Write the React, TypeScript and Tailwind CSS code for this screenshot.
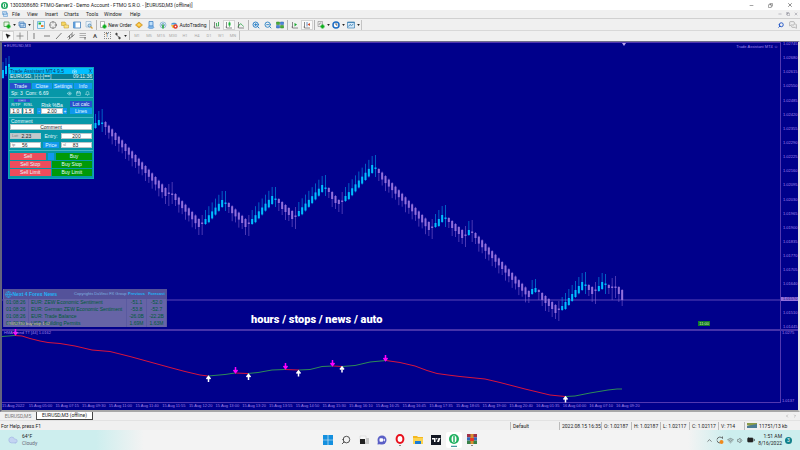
import React from "react";
import {
  Search, Cloud, Wifi, Volume1, BatteryFull, ChevronUp, ChevronLeft, ChevronRight,
  Minus, X, Copy, ZoomIn, ZoomOut, Crosshair, MousePointer2, MessagesSquare, Camera, Eye, Bell, Calendar, Globe,
} from "lucide-react";

type Candle = { x: number; top: number; bottom: number; high: number; low: number; up: boolean };
// [first index, first top, first bottom, last index, last top, last bottom]
type Run = [number, number, number, number, number, number];
// [index, price, high, low, rising]
type Doji = [number, number, number, number, boolean];

const RUNS: Run[] = [
  [0, 123, 128, 1, 120, 125],
  [3, 122, 127, 21, 188, 196],
  [24, 194, 200, 31, 219, 227],
  [33, 219, 224, 38, 200, 207],
  [40, 203, 207, 45, 219, 227],
  [47, 219, 224, 53, 196, 204],
  [55, 199, 203, 59, 211, 219],
  [61, 211, 216, 68, 185, 192],
  [70, 188, 192, 73, 200, 204],
  [75, 196, 201, 83, 165, 173],
  [85, 169, 173, 100, 222, 230],
  [102, 223, 227, 104, 215, 222],
  [106, 218, 222, 110, 230, 238],
  [112, 230, 235, 112, 230, 235],
  [114, 233, 238, 130, 291, 297],
  [131, 289, 294, 132, 288, 292],
  [133, 290, 292, 138, 305, 313],
  [140, 306, 310, 146, 282, 290],
  [148, 285, 290, 149, 287, 294],
  [151, 286, 291, 152, 282, 289],
  [154, 285, 288, 154, 285, 288],
  [157, 287, 294, 158, 290, 300],
];
const RISING = new Set([0, 33, 47, 61, 75, 102, 112, 131, 140, 151]);

const DOJIS: Doji[] = [
  [2, 123, 109, 132, true], [22, 193, 184, 206, false], [23, 194, 182, 204, false],
  [32, 223, 215, 235, false], [39, 203, 191, 211, true], [46, 223, 215, 236, false],
  [54, 199, 187, 207, true], [60, 216, 207, 229, false], [69, 188, 175, 196, true],
  [74, 201, 192, 214, false], [84, 168, 155, 177, true], [101, 227, 219, 239, false],
  [105, 218, 205, 227, true], [111, 235, 226, 247, false], [113, 232, 220, 242, false],
  [139, 309, 301, 321, false], [147, 285, 272, 294, true], [150, 290, 282, 304, false],
  [153, 284, 274, 294, true], [155, 287, 278, 300, false], [156, 287, 276, 298, false],
];

function buildCandles(): Candle[] {
  const at = (i: number) => 95.5 + i * (10 / 3);
  const out: Candle[] = [];
  for (const [a, t0, b0, z, t1, b1] of RUNS) {
    const up = RISING.has(a);
    for (let i = a; i <= z; i++) {
      const f = z === a ? 0 : (i - a) / (z - a);
      const top = t0 + (t1 - t0) * f;
      const end = b0 + (b1 - b0) * f;
      const bottom = i > a && i < z ? Math.max(end, top + 7) : end;
      out.push({ x: at(i), top, bottom, high: up ? top - 9 : top - 1, low: up ? bottom + 1 : bottom + 6 + (i % 2) * 2, up });
    }
  }
  for (const [i, y, high, low, up] of DOJIS) out.push({ x: at(i), top: y - 0.5, bottom: y + 1, high, low, up });
  out.push({ x: 3, top: 70, bottom: 78, high: 62, low: 79, up: true });
  out.push({ x: 6, top: 66, bottom: 74, high: 58, low: 76, up: true });
  out.push({ x: 9, top: 64, bottom: 68, high: 56, low: 70, up: true });
  return out;
}
const CANDLES = buildCandles();

const PRICES = Array.from({ length: 21 }, (_, i) => (1.02745 - i * 0.00065).toFixed(5));
const LAST_PRICE_ROW = 18;
const TIMES = [
  "15 Aug 2022", "15 Aug 05:00", "15 Aug 07:15", "15 Aug 09:30", "15 Aug 11:00", "15 Aug 11:40", "15 Aug 11:55",
  "15 Aug 12:20", "15 Aug 13:00", "15 Aug 13:20", "15 Aug 13:55", "15 Aug 14:50", "15 Aug 15:30", "15 Aug 16:10",
  "15 Aug 16:25", "15 Aug 16:45", "15 Aug 17:35", "15 Aug 18:05", "15 Aug 19:00", "15 Aug 20:40", "16 Aug 01:35",
  "16 Aug 04:00", "16 Aug 07:10", "16 Aug 09:20",
];

const RED = [
  "15,335.5 22,336 30,338.5 40,341 48,342.5 60,343.5 75,346 92,350 110,351.5 130,356.5 150,362 170,367.5 185,371.5 200,375 208,376",
  "235,373 248,373.5", "285,369.5 299,370", "333,366 342,366.5",
  "386,360.5 400,362.5 415,366 427,370.5 437,373.5 448,375 460,376.5 485,379 500,382.5 525,389 550,395 565,396.5",
];
const GREEN = [
  "2,336.5 15,335.5", "208,376 225,374.5 235,373", "248,373.5 258,372.5 272,370 285,369.5",
  "299,370 310,369.5 322,366.5 333,366", "342,366.5 355,365.5 370,362 386,360.5", "565,396.5 575,396 590,393 608,390 617,389 622,389",
];
const DOWN = [[15.5, 332], [235.5, 370], [285.5, 366], [332.5, 363], [385.5, 358]];
const UP = [[208.5, 379], [248.5, 377], [298.5, 373.5], [342, 369.5], [565.5, 399.5]];

function Sep() {
  return <span className="mx-px h-[10px] w-px shrink-0 bg-[#b4b4b4]" />;
}

function Tool({ label, pressed, menu, children }: { label: string; pressed?: boolean; menu?: boolean; children: React.ReactNode }) {
  return (
    <button aria-label={label} className={`flex h-[10px] shrink-0 items-center justify-center ${menu ? "w-[15px]" : "w-[12px]"} ${pressed ? "border border-[#d4d4d4] bg-[#fafafa]" : ""}`}>
      {children}
      {menu && <svg viewBox="0 0 4 3" className="ml-[2px] h-[2px] w-[3px] shrink-0"><path d="M0 0h4L2 3z" fill="#222" /></svg>}
    </button>
  );
}

function Ic({ children }: { children: React.ReactNode }) {
  return <svg viewBox="0 0 16 16" className="h-[8px] w-[8px] shrink-0" fill="none">{children}</svg>;
}

const plus = <path d="M11 7v8M7 11h8" stroke="#0caf1c" strokeWidth="4" />;
const axes = <path d="M3 2v12h11M1 12h3" stroke="#666" strokeWidth="1.5" />;

function Toolbar() {
  return (
    <div className="flex h-[12px] items-center border-t border-[#d0d0d0] bg-[#f0f0f0] pl-[2px]">
      <Tool label="New chart" menu><Ic><path d="M2 2h10v9H2z" fill="#e8f5e4" stroke="#4a9a4a" strokeWidth="1.5" />{plus}</Ic></Tool>
      <Tool label="Profiles" menu><Ic><path d="M2 2h10v8H2zM4 5h11v8H4z" fill="#c9e0f6" stroke="#4a82bc" strokeWidth="1.5" /></Ic></Tool>
      <Sep />
      <Tool label="Market watch"><Ic><path d="M1 1h14v14H1z" fill="#e4f4fb" stroke="#58a8d8" strokeWidth="1.5" /><path d="M3 3h5v4H3z" fill="#1cb430" /><path d="M8 8h5v4H8z" fill="#f08030" /></Ic></Tool>
      <Tool label="Data window"><Crosshair size={8} color="#666" /></Tool>
      <Tool label="Navigator"><Ic><path d="M1 2h7l2 3v4H1z" fill="#f6d660" stroke="#b8922a" /><path d="M6 8h9v6H6z" fill="#fbe486" stroke="#b8922a" /></Ic></Tool>
      <Tool label="Terminal"><Ic><path d="M1 2h14v12H1z" fill="#fff" stroke="#3a78b8" strokeWidth="1.5" /><path d="M1 2h4v12H1z" fill="#5c9ddb" /></Ic></Tool>
      <Tool label="Strategy tester"><Ic><path d="M2 1h10v11H2z" fill="#eaf4fb" stroke="#7aa0c0" /><circle cx="9" cy="9" r="3" fill="#b8dcf4" stroke="#5080a8" strokeWidth="1.5" /><path d="m11 11 4 4" stroke="#d8a030" strokeWidth="2.5" /></Ic></Tool>
      <Sep />
      <button className="flex h-[10px] shrink-0 items-center pl-px">
        <Ic><path d="M3 1h8v12H3z" fill="#fff" stroke="#777" />{plus}</Ic>
        <span className="w-[26px] text-center">New Order</span>
      </button>
      <Tool label="MetaEditor"><Ic><path d="m8 2 7 6-7 6-7-6z" fill="#f2b32c" stroke="#b67c10" /><path d="m8 5 4 3-4 2-4-2z" fill="#fbdc70" /></Ic></Tool>
      <Tool label="Virtual hosting"><Ic><path d="M4 1h8v9H4z" fill="#bfe0fa" stroke="#3a7cc4" strokeWidth="1.5" /><ellipse cx="8" cy="12.500" rx="6" ry="2.500" fill="#7fb8ec" stroke="#3a7cc4" /></Ic></Tool>
      <Tool label="Signals"><Ic><circle cx="8" cy="8" r="6" stroke="#7fb0d4" strokeWidth="1.500" /><circle cx="8" cy="8" r="3" stroke="#5a98c8" strokeWidth="1.500" /><path d="M8 7v8" stroke="#28a838" strokeWidth="3" /></Ic></Tool>
      <button className="flex h-[10px] shrink-0 items-center pl-px">
        <Ic><path d="M2 7c0-5 12-5 12 0z" fill="#4a9ad4" /><path d="M2 8h9l-2 6H5z" fill="#f0c040" /><circle cx="11" cy="11" r="4.500" fill="#e03020" /><path d="M9.500 9.500h3v3h-3z" fill="#fff" /></Ic>
        <span className="w-[30px] text-center">AutoTrading</span>
      </button>
      <Sep />
      <Tool label="Bar chart"><Ic>{axes}<path d="M7 4v7M11 2v8M9 10h2" stroke="#0c9a2c" strokeWidth="1.500" /></Ic></Tool>
      <Tool label="Candlesticks" pressed><Ic>{axes}<path d="M9 1v11" stroke="#0c9a2c" /><path d="M7 3h4v6H7z" fill="#14b834" /></Ic></Tool>
      <Tool label="Line chart"><Ic>{axes}<path d="M3 11c3-8 5-6 10 0" stroke="#0c9a2c" strokeWidth="1.500" /></Ic></Tool>
      <Sep />
      <Tool label="Zoom in"><ZoomIn size={8} color="#2a80c8" strokeWidth={3} /></Tool>
      <Tool label="Zoom out"><ZoomOut size={8} color="#3a8ac8" strokeWidth={3} /></Tool>
      <Tool label="Tile windows"><Ic><path d="M1 2h6v5H1zM9 9h6v5H9z" fill="#48b038" stroke="#287c20" /><path d="M9 2h6v5H9zM1 9h6v5H1z" fill="#4888dc" stroke="#2858a8" /></Ic></Tool>
      <Sep />
      <Tool label="Auto scroll"><Ic>{axes}<path d="m7 4 5 3-5 4z" fill="#18a830" /></Ic></Tool>
      <Tool label="Chart shift" pressed><Ic>{axes}<path d="M8 2v9" stroke="#3870b8" strokeWidth="1.500" /><path d="m14 4-5 3 5 3z" fill="#d05030" /></Ic></Tool>
      <Sep />
      <Tool label="Indicators" menu><Ic><path d="M2 1h9v10H2z" fill="#eee" stroke="#777" /><path d="M4 8c2-6 3-3 5-4" stroke="#444" />{plus}</Ic></Tool>
      <Tool label="Periods" menu><Ic><circle cx="8" cy="8" r="6" fill="#fff" stroke="#1c6cc4" strokeWidth="3" /><path d="M8 4v4h3" stroke="#333" strokeWidth="1.500" /></Ic></Tool>
      <Tool label="Templates" menu><Ic><path d="M1 2h14v12H1z" fill="#d4e8f8" stroke="#4888b8" strokeWidth="1.500" /><path d="M1 3h14M3 11l3-4 3 2 4-3" stroke="#4888b8" strokeWidth="2" /></Ic></Tool>
      <span className="h-[10px] w-px bg-[#c4c4c4]" />
      <div className="ml-auto flex items-center gap-[5px] pr-[3px]">
        <button aria-label="Search"><Search size={6} color="#2a5cc8" strokeWidth={4} className="-scale-x-100" /></button>
        <button aria-label="Chat"><MessagesSquare size={8} color="#9a9a9a" /></button>
      </div>
    </div>
  );
}

function LineTools() {
  return (
    <div className="flex h-[10px] items-center border-t border-[#d8d8d8] bg-[#f0f0f0] pl-[2px] text-[4px]">
      <Tool label="Cursor" pressed><MousePointer2 size={6} fill="#111" color="#111" /></Tool>
      <Tool label="Crosshair"><Ic><path d="M8 1v14M1 8h14" stroke="#777" strokeWidth="1.500" /></Ic></Tool>
      <Sep />
      <Tool label="Vertical line"><Ic><path d="M6 2v12" stroke="#555" strokeWidth="1.500" /></Ic></Tool>
      <Tool label="Horizontal line"><Ic><path d="M2 8h12" stroke="#555" strokeWidth="1.500" /></Ic></Tool>
      <Tool label="Trendline"><Ic><path d="M2 14 13 2" stroke="#555" strokeWidth="1.500" /></Ic></Tool>
      <Tool label="Channel"><Ic><path d="M1 11 12 1M3 15 15 5M5 7v6M10 4v6" stroke="#555" strokeWidth="1.500" /></Ic></Tool>
      <Tool label="Fibonacci"><Ic><path d="M1 3h13M1 7h13M1 11h13" stroke="#999" strokeWidth="1.500" /><path d="M12 10v5" stroke="#666" strokeWidth="2" /></Ic></Tool>
      <Tool label="Text"><span className="text-[6px] font-bold text-[#555]">A</span></Tool>
      <Tool label="Text label"><span className="h-[7px] w-[7px] border border-dotted border-[#888] text-[5px] leading-[5px] text-[#444]">T</span></Tool>
      <Tool label="Arrows" menu><Ic><path d="m2 4 3-3 3 3-3 3zM8 12l3-3 3 3-3 3z" fill="#444" /><path d="m5 6 6 5" stroke="#444" strokeWidth="1.500" /></Ic></Tool>
      <Sep />
      {["M1", "M5", "M15", "M30", "H1", "H4", "D1", "W1", "MN"].map((p) => (
        <button key={p} className="w-[12px] text-center text-[#a8a8a8]">{p}</button>
      ))}
      <span className="h-[10px] w-px bg-[#c4c4c4]" />
    </div>
  );
}

const field = "h-[6px] min-w-0 border border-[#b8c4c8] bg-white text-center text-[5px] leading-[4px] text-[#222]";
const blue = "h-[6px] bg-[#1098ee] text-center leading-[6px]";
const navy = "h-[6px] bg-[#2a50cc] text-center leading-[6px]";
const red = "h-[7px] bg-[#ee4c5c]";
const green = "h-[7px] bg-[#009a08]";

function TaggedField({ id, tag, value, muted }: { id: string; tag: string; value: string; muted?: boolean }) {
  return (
    <div className={`flex h-[6px] border border-[#b8c4c8] leading-[4px] text-[#222] ${muted ? "bg-[#c4c8cc]" : "bg-white"}`}>
      <label htmlFor={id} className="pl-px text-[4px] text-[#777]">{tag}</label>
      <input id={id} defaultValue={value} className="w-0 min-w-0 flex-1 pr-[6px] text-center text-[5px] leading-[4px]" />
    </div>
  );
}

function TradePanel() {
  return (
    <section className="absolute left-[6px] top-[24px] flex w-[86px] flex-col border border-[#12a4b8] bg-[#0797a8] font-['Liberation_Sans',sans-serif] text-[5px] leading-[6px] text-[#e6fbff]">
      <header className="flex h-[6px] items-center bg-[#00bfff] px-px text-[#10305c]">
        <span className="whitespace-nowrap">Trade Assistant MT4 9.5</span>
        <Camera size={5} className="ml-[8px]" color="#fff" />
        <button aria-label="Close panel" className="ml-auto">X</button>
      </header>
      <div className="flex h-[6px] justify-between border-b border-[#7cc8d4] bg-[#0b7f96] px-px leading-[5px]"><span>EURUSD, |-|-|-[==]</span><span>09:11:36</span></div>
      <nav className="mt-[3px] flex justify-between gap-px px-px">
        <button className={`${navy} w-[21px]`}>Trade</button>
        <button className={`${blue} w-[20px]`}>Close</button>
        <button className={`${blue} w-[20px]`}>Settings</button>
        <button className={`${blue} w-[18px]`}>Info</button>
      </nav>
      <div className="mt-px flex h-[6px] items-center px-[2px]">
        <span>Sp: 3&nbsp; Com: 6.69</span>
        <span className="ml-auto flex gap-[4px] pr-px"><Eye size={5} /><Calendar size={5} /><Bell size={5} /></span>
      </div>
      <div className="mt-px flex items-end gap-[3px] border-t border-[#45b8c6] px-px pt-px">
        <div className="grid w-[24px] grid-cols-2 gap-x-px">
          <button aria-label="Swap" className="col-span-2 mx-auto flex h-[3px] w-[16px] items-center justify-center bg-[#2a50cc]"><svg viewBox="0 0 8 3" className="h-[3px] w-[8px]" fill="none" stroke="#fff" strokeWidth=".6"><path d="M0 .5l1 1-1 1M2 .5l1 1-1 1M4 .5v2M6 .5l-1 1 1 1M8 .5l-1 1 1 1" /></svg></button>
          <label htmlFor="rtp" className="text-center text-[4px]">R/TP</label><label htmlFor="rsl" className="text-center text-[4px]">R/SL</label>
          <input id="rtp" className={field} defaultValue="1.0" /><input id="rsl" className={field} defaultValue="1.5" />
        </div>
        <div className="flex w-[30px] flex-col">
          <label htmlFor="risk" className="text-center">Risk %Ba</label>
          <div className="flex"><button className={`${blue} w-[4px]`}>-</button><input id="risk" className={`${field} w-0 flex-1`} defaultValue="2.00" /><button className={`${blue} w-[4px]`}>+</button></div>
        </div>
        <div className="flex flex-1 flex-col gap-px">
          <button className={navy}>Lot calc</button>
          <button className={blue}>Lines</button>
        </div>
      </div>
      <div className="mt-[3px] flex flex-col border-t border-[#45b8c6] px-px">
        <label htmlFor="comment" className="px-px">Comment</label>
        <input id="comment" className={field} defaultValue="Comment" />
      </div>
      <div className="mt-[3px] grid grid-cols-[31px_1fr_31px] gap-x-[2px] gap-y-[3px] px-px">
        <TaggedField id="lot" tag="Lot:" value="2.23" muted />
        <label htmlFor="entry" className="text-center">Entry:</label>
        <input id="entry" className={field} defaultValue="200" />
        <TaggedField id="tp" tag="tp" value="56" />
        <button className={blue}>Price</button>
        <TaggedField id="sl" tag="sl" value="83" />
      </div>
      <div className="mt-[2px] flex flex-col gap-px border-t border-[#45b8c6] px-px pb-[2px] pt-[2px] leading-[7px]">
        <div className="flex gap-[2px]"><button className={`${red} w-[36px]`}>Sell</button><button aria-label="Mode" className="h-[7px] w-[6px] bg-[#1098ee]" /><button className={`${green} flex-1`}>Buy</button></div>
        <div className="grid grid-cols-2 gap-px">
          <button className={red}>Sell Stop</button><button className={green}>Buy Stop</button>
          <button className={red}>Sell Limit</button><button className={green}>Buy Limit</button>
        </div>
      </div>
    </section>
  );
}

const NEWS = [
  ["01:08:26", "EUR: ZEW Economic Sentiment", "-51.1", "-52.0"],
  ["01:08:26", "EUR: German ZEW Economic Sentiment", "-53.8", "-52.7"],
  ["01:08:26", "EUR: Trade Balance", "-26.0B", "-22.2B"],
  ["01:08:26", "USD: Building Permits", "1.69M", "1.63M"],
];

function NewsPanel() {
  const td = "border-x border-[#5a5aa0] p-0";
  return (
    <section className="absolute bottom-[2px] left-px w-[164px] bg-[#6664a6] font-['Liberation_Sans',sans-serif] text-[5px]">
      <table className="w-full table-fixed border-collapse">
        <colgroup><col className="w-[25px]" /><col className="w-[98px]" /><col className="w-[20px]" /><col /></colgroup>
        <thead>
          <tr className="h-[10px] bg-[#54529a] text-[#1fb2f6]">
            <th colSpan={2} className="p-0 text-left">
              <span className="flex items-center gap-px pl-px"><Globe size={7} className="shrink-0" /><span className="whitespace-nowrap">Next 4 Forex News</span><span className="ml-auto whitespace-nowrap text-[4px] font-normal text-[#7fb4e0]">Copyrights DaVinci FX Group</span></span>
            </th>
            <th className="p-0 text-[4px]">Previous</th>
            <th className="p-0 text-[4px]">Forecast</th>
          </tr>
        </thead>
        <tbody>
          {NEWS.map((r, i) => (
            <tr key={i} className="h-[7px] leading-[7px] text-[#005c38]">
              <td className={`${td} pl-[2px]`}>{r[0]}</td>
              <td className={`${td} whitespace-nowrap pl-[2px]`}>{r[1]}</td>
              <td className={`${td} text-center`}>{r[2]}</td>
              <td className={`${td} text-center`}>{r[3]}</td>
            </tr>
          ))}
        </tbody>
      </table>
      <span className="absolute bottom-px left-[4px] text-[4px] leading-[5px] text-[#c8c890]">#3352740 buy stop 1.02</span>
    </section>
  );
}

function Chart() {
  return (
    <main className="flex min-h-0 flex-1 flex-col border-x-2 border-b-2 border-t border-b-[#a8a8a8] border-l-[#62627e] border-r-[#e4e4e4] border-t-[#70708c] bg-[#00008b] font-['Liberation_Sans',sans-serif] text-[4px] leading-[4px] text-[#a284ea]">
      <div className="flex min-h-0 flex-[287]">
        <div className="relative min-w-0 flex-1 border-r border-t border-[#5238b0]">
          <svg viewBox="2 43 778 286" preserveAspectRatio="none" className="absolute inset-0 h-full w-full">
            <path d="M2 300h778" stroke="#5a44b8" />
            {CANDLES.map((c, i) => (
              <g key={i} fill={c.up ? "#00bfff" : "#9370db"}>
                <rect x={c.x - 0.5} y={c.high} width="1" height={c.low - c.high} opacity="0.5" />
                <rect x={c.x - 1} y={c.top} width="2" height={c.bottom - c.top} />
              </g>
            ))}
            <path d="M622 43h4l-2 3z" fill="#b9a4f0" />
          </svg>
          <h1 className="absolute left-[2px] top-px text-[4px] font-normal">▾ EURUSD,M3</h1>
          <span className="absolute right-[2px] top-[2px]">Trade Assistant MT4 ☺</span>
          <TradePanel />
          <NewsPanel />
          <p className="absolute bottom-0 left-[249px] whitespace-nowrap font-[Roboto,sans-serif] text-[11px] font-black leading-[18px] text-white">hours / stops / news / auto</p>
          <span className="absolute bottom-[3px] right-[70px] bg-[#157a28] px-px text-[4px] leading-[5px] text-[#d8f0c0]">11:00</span>
        </div>
        <div className="flex w-[17px] flex-col justify-between">
          {PRICES.map((p, i) => i === LAST_PRICE_ROW
            ? <span key={p} className="bg-[#9370db] pl-[2px] text-[#20107c]">1.01570</span>
            : <span key={p} className="pl-[2px]">{p}</span>)}
        </div>
      </div>
      <div className="h-[2px] bg-[#4632aa]" />
      <div className="flex min-h-0 flex-[72]">
        <div className="relative min-w-0 flex-1 border-b border-r border-[#5238b0]">
          <svg viewBox="2 331 778 71" preserveAspectRatio="none" className="absolute inset-0 h-full w-full overflow-visible" fill="none">
            {RED.map((p) => <polyline key={p} points={p} stroke="#d8143c" />)}
            {GREEN.map((p) => <polyline key={p} points={p} stroke="#2e8b57" />)}
            {DOWN.map(([x, y]) => <path key={x} d={`M${x} ${y - 3}v5M${x - 2} ${y}l2 2.500 2-2.500`} stroke="#ff00ff" strokeWidth="1.500" />)}
            {UP.map(([x, y]) => <path key={x} d={`M${x} ${y + 3}v-5M${x - 2} ${y}l2-2.500 2 2.500`} stroke="#fff" strokeWidth="1.500" />)}
          </svg>
          <span className="absolute left-[2px] top-0">HMA Trend TT [44] 1.0162</span>
        </div>
        <div className="flex w-[17px] flex-col justify-between pl-px"><span>1.0275</span><span>1.0137</span></div>
      </div>
      <div className="grid h-[7px] w-[80.5%] grid-cols-[repeat(24,minmax(0,1fr))] pt-px">
        {TIMES.map((t) => <span key={t} className="whitespace-nowrap">{t}</span>)}
      </div>
    </main>
  );
}

function Taskbar() {
  const slot = "flex h-[16px] w-[16px] items-center justify-center rounded-[2px]";
  return (
    <footer className="grid h-[20px] grid-cols-[1fr_auto_1fr] items-center bg-[linear-gradient(90deg,#cdeeee_0%,#cdeeee_12%,#f3f3f3_18%,#f3f3f3_86%,#cdeeee_91%)]">
      <div className="flex items-center gap-[4px] pl-[8px]">
        <Cloud size={10} fill="#c3d4f2" color="#a9bde6" />
        <div className="leading-[7px]"><div>64°F</div><div className="text-[#667]">Cloudy</div></div>
      </div>
      <div className="flex gap-[2px]">
        <button aria-label="Start" className={slot}><svg viewBox="0 0 10 10" className="size-[10px]"><path d="M0 0h4.700v4.700H0zM5.300 0H10v4.700H5.300zM0 5.300h4.700V10H0zM5.300 5.300H10V10H5.300z" fill="#1490df" /></svg></button>
        <button aria-label="Search" className={slot}><Search size={10} color="#333" className="-scale-x-100" /></button>
        <button aria-label="Task view" className={slot}><svg viewBox="0 0 10 10" className="size-[10px]"><path d="M3 3h7v6H3z" fill="#c8c8c8" /><path d="M1 1h6v6H1z" fill="#f8f8f8" stroke="#ccc" strokeWidth=".5" /><path d="M1 4h5v5H1z" fill="#222" /></svg></button>
        <button aria-label="Chat" className={slot}><svg viewBox="0 0 10 10" className="size-[10px]"><circle cx="5" cy="5" r="4.500" fill="#5a5fc6" /><path d="m1 6-.5 3.500L5 9z" fill="#5a5fc6" /><rect x="2.500" y="3.200" width="3.500" height="3.600" rx=".8" fill="#fff" /><path d="m6 5 1.800-1.500v3z" fill="#fff" /></svg></button>
        <button aria-label="Opera" className={slot}><svg viewBox="0 0 10 12" className="h-[12px] w-[10px]"><ellipse cx="5" cy="5" rx="3.400" ry="3.900" fill="#fff" stroke="#e8101c" strokeWidth="2" /><path d="M4 11.500h2" stroke="#888" /></svg></button>
        <button aria-label="Explorer" className={slot}><svg viewBox="0 0 10 10" className="size-[10px]"><path d="M0 1h4l1 1h5v7H0z" fill="#f5b820" /><path d="M0 3h10v6H0z" fill="#fcd450" /><path d="M2 6h6v3H2z" fill="#1c7cd4" /></svg></button>
        <button aria-label="TradingView" className={slot}><svg viewBox="0 0 10 10" className="size-[10px]"><path d="M0 0h10v10H0z" fill="#131722" /><path d="M1 3h3.500v4H3V4.500H1zM7.500 3h2L8 7H6z" fill="#fff" /><circle cx="5.700" cy="3.800" r=".8" fill="#fff" /></svg></button>
        <button aria-label="MetaTrader" className={`${slot} bg-white`}><svg viewBox="0 0 12 14" className="h-[14px] w-[12px]"><circle cx="6" cy="6" r="5" fill="#1fb060" /><ellipse cx="6" cy="6" rx="2.500" ry="3.500" fill="#fff" /><path d="M6 3v6" stroke="#1fb060" strokeWidth="1.500" /><path d="M3 13.300h6" stroke="#188088" /></svg></button>
        <button aria-label="WinRAR" className={slot}><svg viewBox="0 0 10 12" className="h-[12px] w-[10px]"><path d="M0 0h10v3.300H0z" fill="#a03048" /><path d="M0 3.300h10v3.300H0z" fill="#3468b8" /><path d="M0 6.600h10V10H0z" fill="#388048" /><path d="M3.500 0h3v10h-3z" fill="#d89030" /><path d="M3 4h4v3H3z" fill="#e83828" /><path d="M4 11.500h2" stroke="#888" /></svg></button>
      </div>
      <div className="flex items-center justify-end gap-[3px] pr-[8px]">
        <ChevronUp size={7} color="#333" />
        <svg viewBox="0 0 16 16" className="size-[8px]" fill="none"><path d="M2 7a6 6 0 0 1 11-2V1M2 9a6 6 0 0 0 6 5" stroke="#444" strokeWidth="1.500" /><circle cx="11" cy="12" r="4" fill="#f08a1c" /></svg>
        <Wifi size={7} color="#555" /><Volume1 size={7} color="#555" /><BatteryFull size={8} fill="#222" color="#222" />
        <div className="text-right leading-[7px]"><div>1:51 AM</div><div>8/16/2022</div></div>
        <span className="h-[7px] w-[7px] rounded-full bg-[#10808a] text-center text-[5px] leading-[7px] text-white">3</span>
      </div>
    </footer>
  );
}

export default function App() {
  const cell = "border-l border-[#bbb] pl-[2px]";
  return (
    <div className="flex h-screen flex-col overflow-hidden bg-[#f0f0f0] font-[Roboto,sans-serif] text-[5px] leading-[8px] text-[#222]">
      <header className="flex h-[10px] items-center bg-white pl-px">
        <svg viewBox="0 0 12 12" className="mr-[2px] size-[7px]"><circle cx="6" cy="6" r="6" fill="#1fa860" /><ellipse cx="6" cy="6" rx="3" ry="4" fill="#fff" /><path d="M6 3v6" stroke="#1fa860" strokeWidth="2" /></svg>
        <span>1300308680: FTMO-Server2 - Demo Account - FTMO S.R.O. - [EURUSD,M3 (offline)]</span>
        <div className="ml-auto flex gap-[14px] pr-[7px]"><button aria-label="Minimize"><Minus size={5} /></button><button aria-label="Restore"><Copy size={5} className="-scale-x-100" /></button><button aria-label="Close"><X size={6} /></button></div>
      </header>
      <nav className="flex h-[8px] items-center">
        <svg viewBox="0 0 12 12" className="ml-[2px] mr-[3px] size-[6px]"><path d="M1 1h8v6H1zM3 4h8v7H3z" fill="#cfe4f8" stroke="#4c8cc8" /></svg>
        <div className="grid grid-cols-[15px_18px_19px_22px_18px_26px_14px]">
          {["File", "View", "Insert", "Charts", "Tools", "Window", "Help"].map((m) => <button key={m} className="pl-[1px] text-left">{m}</button>)}
        </div>
        <div className="ml-auto flex gap-[4px] pr-[2px] text-[#556]"><button aria-label="Minimize chart"><Minus size={4} /></button><button aria-label="Restore chart"><Copy size={4} /></button><button aria-label="Close chart"><X size={4} /></button></div>
      </nav>
      <Toolbar />
      <LineTools />
      <div className="h-px bg-[#f0f0f0]" />
      <Chart />
      <div className="flex h-[8px] bg-[#f0f0f0]">
        <button className="w-[37px] border-r border-[#555] text-center text-[#777]">EURUSD,M5</button>
        <button className="w-[56px] border-b border-r border-[#444] bg-white text-center leading-[7px]">EURUSD,M3 (offline)</button>
        <span className="ml-auto flex items-center gap-[4px] pr-[3px] text-[#555]"><ChevronLeft size={4} /><ChevronRight size={4} /></span>
      </div>
      <div className="flex h-[10px] items-center border-t border-[#e2e2e2] bg-[#f0f0f0] pl-px">
        <span className="flex-1">For Help, press F1</span>
        <div className="grid grid-cols-[49px_42px_30px_29px_29px_29px_26px_56px] whitespace-nowrap">
          <span className={cell}>Default</span><span className={cell}>2022.08.15 16:35</span><span className={cell}>O: 1.02187</span><span className={cell}>H: 1.02187</span>
          <span className={cell}>L: 1.02117</span><span className={cell}>C: 1.02117</span><span className={cell}>V: 714</span>
          <span className={`${cell} flex items-center gap-[2px]`}><svg viewBox="0 0 10 5" className="h-[5px] w-[10px]"><path d="M0 0h10v5H0z" fill="#8c9c48" /><path d="M0 5V2l10 3z" fill="#d8d8c0" /><path d="M0 3 10 1v4H0z" fill="#4c7c94" /></svg>11751/13 kb</span>
        </div>
      </div>
      <Taskbar />
    </div>
  );
}
